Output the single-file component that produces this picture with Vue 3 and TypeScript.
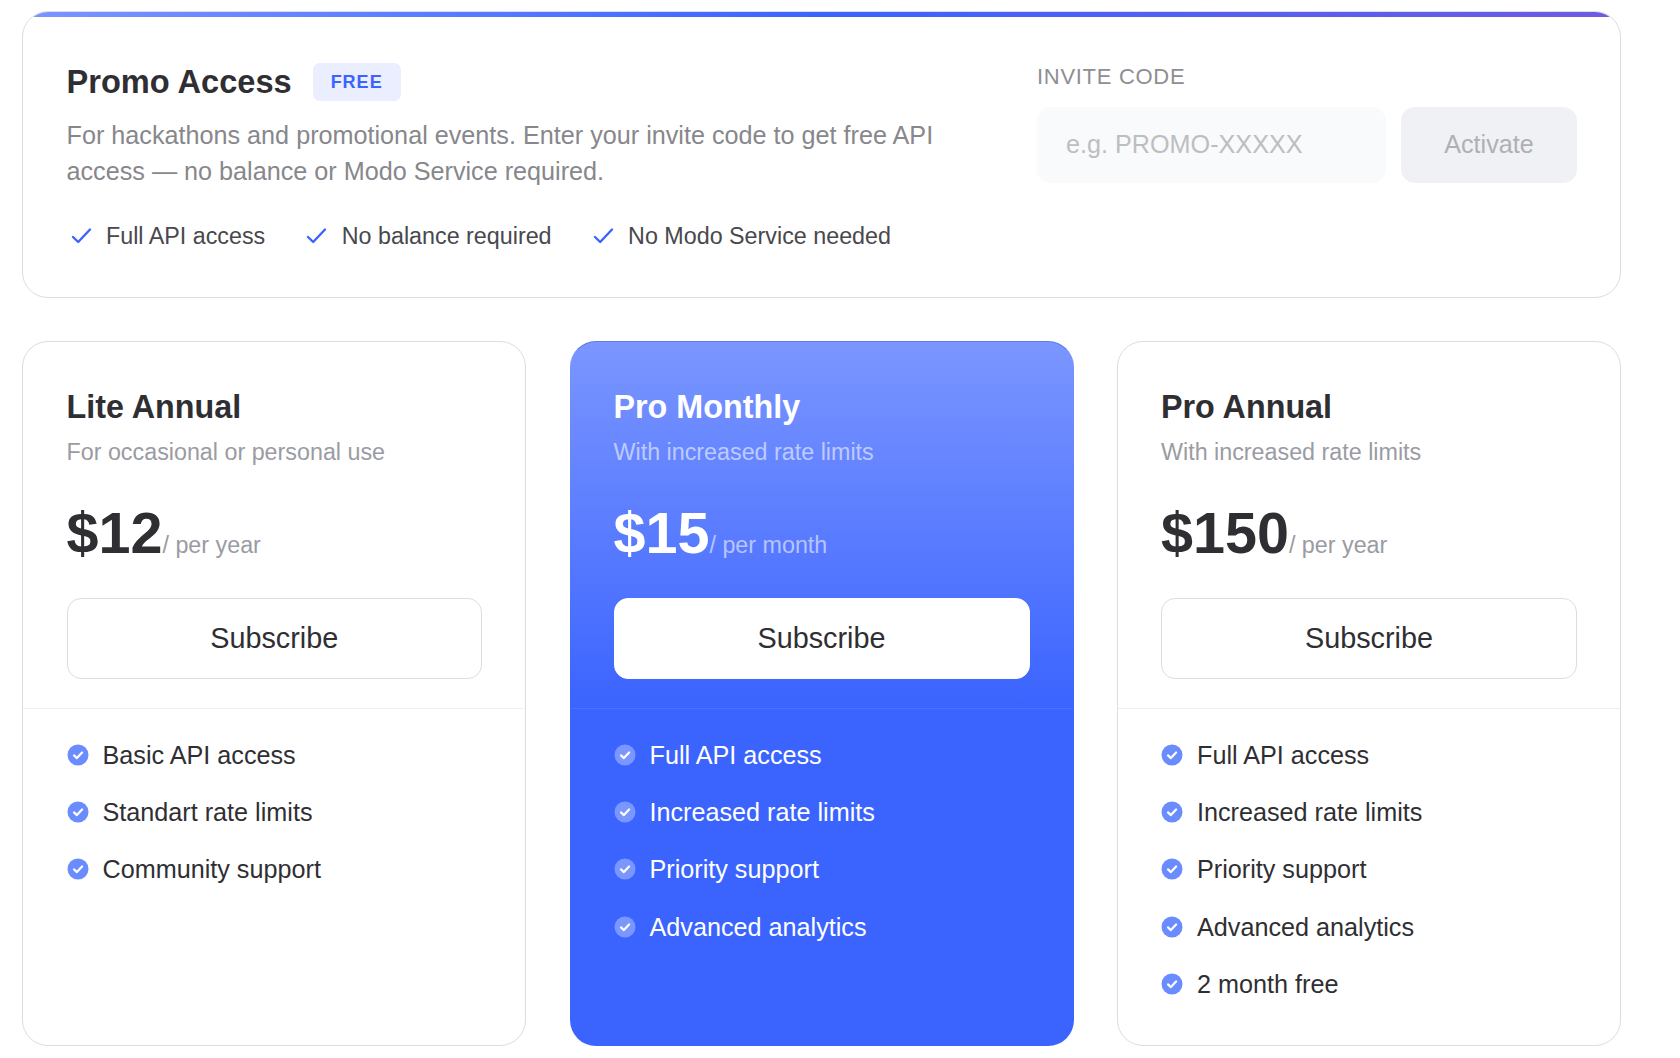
<script setup lang="ts">
interface Plan {
  name: string;
  desc: string;
  price: string;
  period: string;
  features: string[];
  featured?: boolean;
}

const promoPoints = ['Full API access', 'No balance required', 'No Modo Service needed'];

const plans: Plan[] = [
  {
    name: 'Lite Annual',
    desc: 'For occasional or personal use',
    price: '$12',
    period: '/ per year',
    features: ['Basic API access', 'Standart rate limits', 'Community support'],
  },
  {
    name: 'Pro Monthly',
    desc: 'With increased rate limits',
    price: '$15',
    period: '/ per month',
    featured: true,
    features: ['Full API access', 'Increased rate limits', 'Priority support', 'Advanced analytics'],
  },
  {
    name: 'Pro Annual',
    desc: 'With increased rate limits',
    price: '$150',
    period: '/ per year',
    features: ['Full API access', 'Increased rate limits', 'Priority support', 'Advanced analytics', '2 month free'],
  },
];
</script>

<template>
  <div class="page">
    <section class="promo">
      <div class="promo-info">
        <div class="promo-head">
          <h2>Promo Access</h2>
          <span class="badge">FREE</span>
        </div>
        <p class="promo-desc">
          For hackathons and promotional events. Enter your invite code to get free API<br />
          access — no balance or Modo Service required.
        </p>
        <ul class="promo-points">
          <li v-for="point in promoPoints" :key="point">
            <svg width="26" height="26" viewBox="0 0 26 26" fill="none">
              <path d="M6 14l5.2 5L23 6.5" stroke="#3b64ff" stroke-width="2.4" stroke-linecap="round" stroke-linejoin="round" />
            </svg>
            {{ point }}
          </li>
        </ul>
      </div>
      <div class="promo-form">
        <label for="invite">INVITE CODE</label>
        <div class="form-row">
          <input id="invite" type="text" placeholder="e.g. PROMO-XXXXX" />
          <button type="button" disabled>Activate</button>
        </div>
      </div>
    </section>

    <section class="plans">
      <article v-for="plan in plans" :key="plan.name" class="plan" :class="{ featured: plan.featured }">
        <div class="plan-top">
          <h3>{{ plan.name }}</h3>
          <p class="plan-desc">{{ plan.desc }}</p>
          <div class="plan-price">
            <strong>{{ plan.price }}</strong><span>{{ plan.period }}</span>
          </div>
          <button type="button" class="subscribe">Subscribe</button>
        </div>
        <ul class="plan-features">
          <li v-for="feature in plan.features" :key="feature">
            <svg class="tick" width="22" height="22" viewBox="0 0 22 22">
              <circle cx="11" cy="11" r="10.5" class="tick-bg" />
              <path d="M7 11.4l2.9 2.7 5.2-5.6" fill="none" stroke="#fff" stroke-width="2.2" stroke-linecap="round" stroke-linejoin="round" />
            </svg>
            {{ feature }}
          </li>
        </ul>
      </article>
    </section>
  </div>
</template>

<style>
html,
body {
  background: #fff;
}
</style>

<style scoped>
.page {
  width: 1599px;
  margin-left: 22px;
  padding-top: 11px;
  font-family: "Liberation Sans", Arial, sans-serif;
  color: #2f2f33;
}

h2,
h3,
p,
ul {
  margin: 0;
  padding: 0;
}

ul {
  list-style: none;
}

.promo {
  position: relative;
  display: flex;
  justify-content: space-between;
  padding: 51px 43px 44px 43.5px;
  border: 1px solid #dcdde1;
  border-radius: 26px;
  overflow: hidden;
}

.promo::before {
  content: "";
  position: absolute;
  top: 0;
  left: 0;
  right: 0;
  height: 5px;
  background: linear-gradient(90deg, #7a95ff 0%, #3b64ff 50%, #6f5be0 100%);
}

.promo-head {
  display: flex;
  align-items: center;
  gap: 21px;
  height: 38px;
}

.promo-head h2 {
  font-size: 32.6px;
  font-weight: 700;
}

.badge {
  width: 88px;
  height: 38px;
  line-height: 38px;
  text-align: center;
  font-size: 18px;
  font-weight: 700;
  letter-spacing: 1px;
  color: #3d63ff;
  background: #eaeefe;
  border-radius: 7px;
}

.promo-desc {
  margin-top: 16px;
  font-size: 25.2px;
  line-height: 36px;
  color: #87878c;
}

.promo-points {
  display: flex;
  gap: 37px;
  margin-top: 30px;
}

.promo-points li {
  display: flex;
  align-items: center;
  gap: 13.5px;
  font-size: 23.3px;
  line-height: 34px;
  color: #48484d;
}

.promo-form {
  width: 540px;
}

.promo-form label {
  display: block;
  padding-top: 1px;
  font-size: 22px;
  line-height: 25px;
  letter-spacing: 0.7px;
  color: #8e8e93;
}

.form-row {
  display: flex;
  gap: 15px;
  margin-top: 18px;
}

.form-row input {
  flex: 1;
  min-width: 0;
  height: 76px;
  padding: 0 29px 2px;
  box-sizing: border-box;
  border: none;
  border-radius: 14px;
  outline: none;
  background: #f9fafb;
  font: 25.2px "Liberation Sans", Arial, sans-serif;
}

.form-row input::placeholder {
  color: #bdbec2;
  opacity: 1;
}

.form-row button {
  width: 176px;
  height: 76px;
  padding-bottom: 2px;
  border: none;
  border-radius: 14px;
  background: #f0f1f4;
  color: #aeb0b5;
  font: 25.2px "Liberation Sans", Arial, sans-serif;
}

.plans {
  display: grid;
  grid-template-columns: repeat(3, 1fr);
  gap: 43.5px;
  margin-top: 43px;
}

.plan {
  border: 1px solid #dcdde1;
  border-radius: 26px;
  overflow: hidden;
}

.plan-top {
  padding: 43px 43px 29px;
  border-bottom: 1px solid #eeeff1;
}

.plan:first-child .plan-top,
.plan:first-child .plan-features {
  padding-left: 43.5px;
}

.plan-top h3 {
  font-size: 32.3px;
  line-height: 44px;
  font-weight: 700;
}

.plan-desc {
  margin-top: 7px;
  font-size: 23.3px;
  line-height: 32px;
  color: #9a9ba3;
}

.plan-price {
  display: flex;
  align-items: baseline;
  margin-top: 33px;
}

.plan-price strong {
  font-size: 57.5px;
  line-height: 64px;
  font-weight: 700;
}

.plan-price span {
  font-size: 23.3px;
  line-height: 1;
  color: #9a9ba3;
}

.subscribe {
  display: block;
  width: 100%;
  height: 81px;
  margin-top: 33px;
  border: 1px solid #dcdde1;
  border-radius: 14px;
  background: #fff;
  color: #2f2f33;
  font: 28.8px "Liberation Sans", Arial, sans-serif;
}

.plan-features {
  display: flex;
  flex-direction: column;
  gap: 23.4px;
  padding: 28.5px 43px 44px;
}

.plan-features li {
  display: flex;
  align-items: center;
  gap: 14px;
  font-size: 25.2px;
  line-height: 34px;
}

.tick {
  flex: none;
}

.tick-bg {
  fill: #6b8cff;
}

.featured {
  border-color: transparent;
  border-top-color: #5f79e6;
  background: linear-gradient(180deg, #7b96ff 0%, #3b64ff 52%) border-box;
  color: #fff;
}

.featured .plan-top {
  border-bottom-color: #4a70ff;
}

.featured .plan-desc,
.featured .plan-price span {
  color: rgba(255, 255, 255, 0.58);
}

.featured .subscribe {
  border-color: #fff;
}

.featured .tick-bg {
  fill: #7a96ff;
}
</style>
